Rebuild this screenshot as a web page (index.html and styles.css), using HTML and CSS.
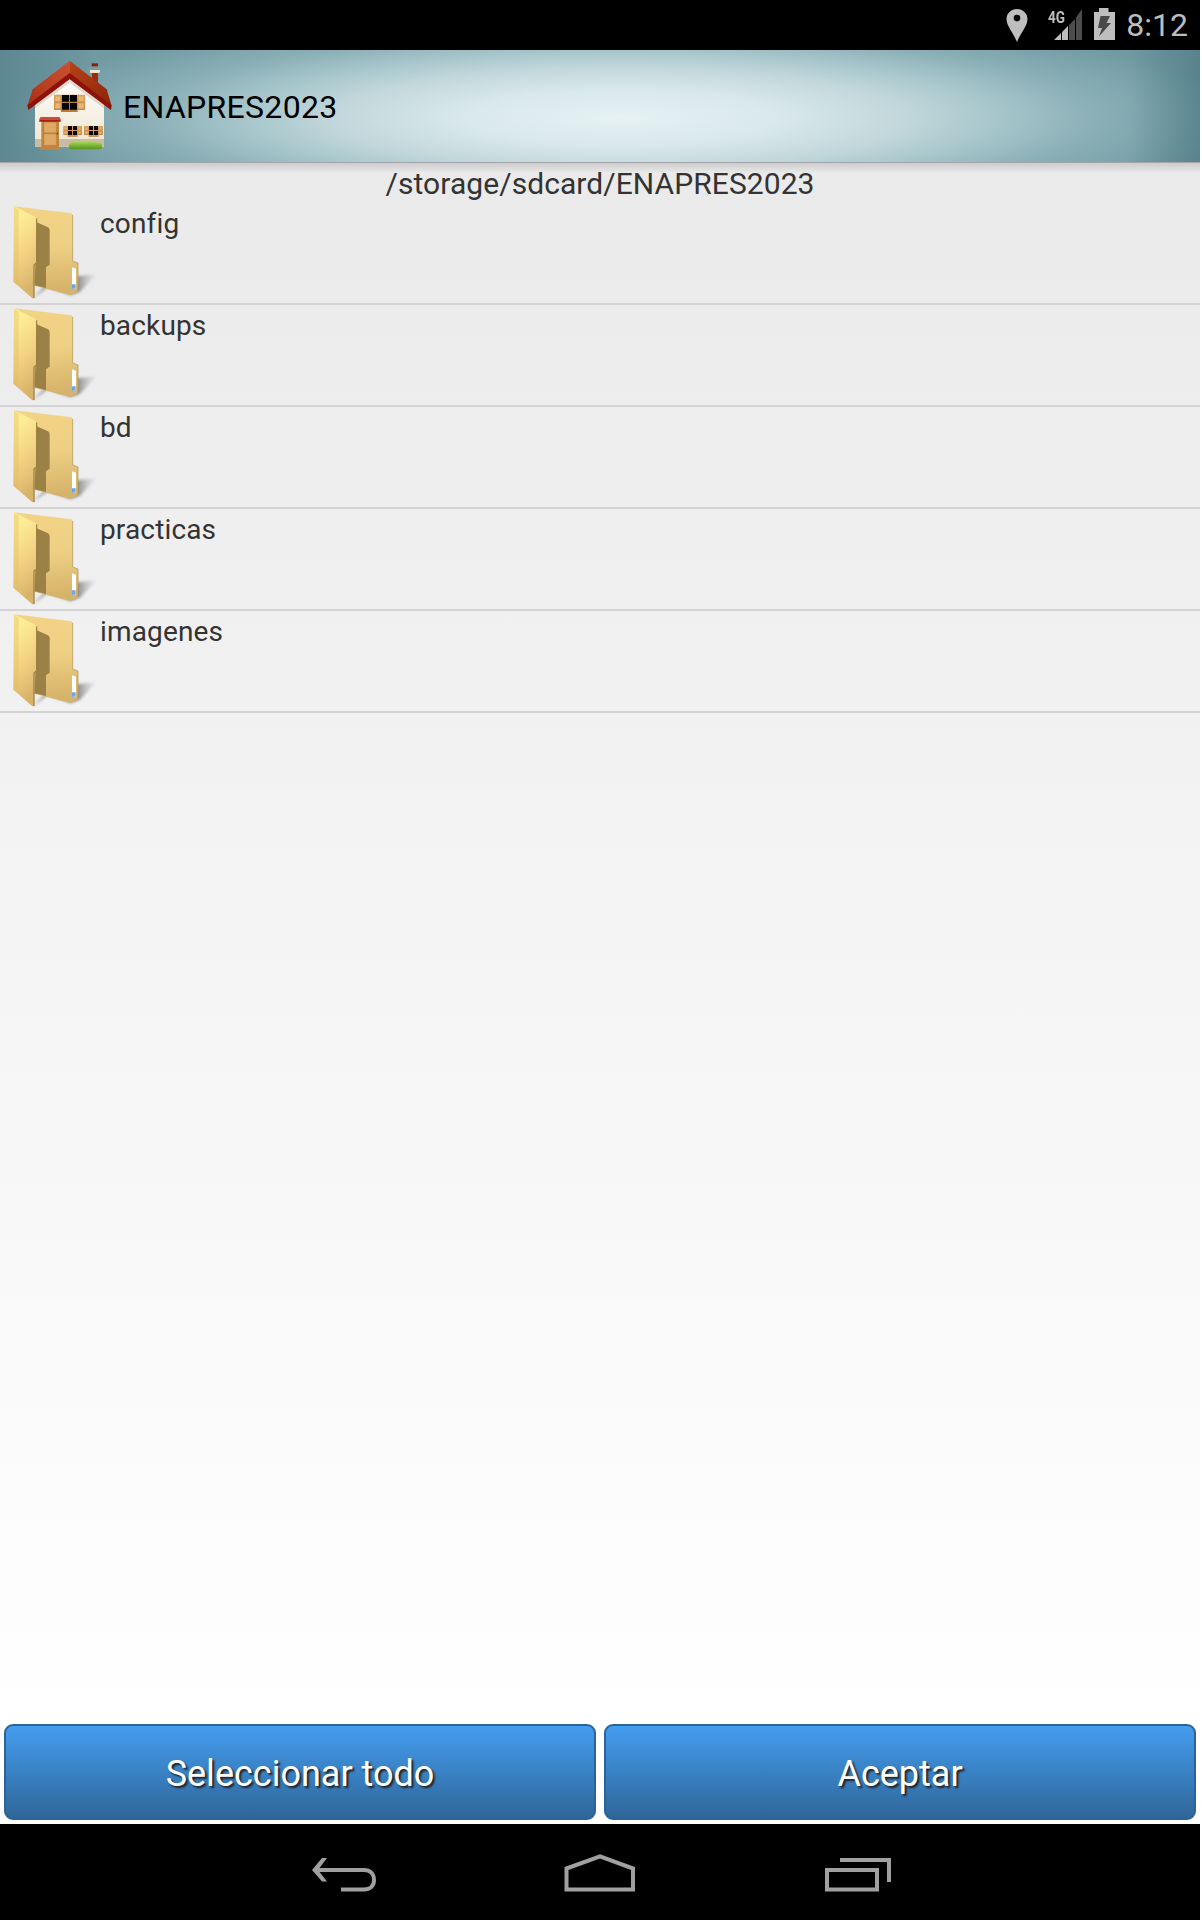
FILE: index.html
```html
<!DOCTYPE html>
<html lang="es">
<head>
<meta charset="utf-8">
<title>ENAPRES2023</title>
<link rel="stylesheet" href="styles.css">
</head>
<body>
<svg width="0" height="0" class="defs">
  <defs>
    <linearGradient id="flap" x1="0" y1="0" x2=".25" y2="1"><stop offset="0" stop-color="#fff09a"/><stop offset=".2" stop-color="#fdec95"/><stop offset=".6" stop-color="#f3d181"/><stop offset="1" stop-color="#d8b46a"/></linearGradient>
    <linearGradient id="back" x1="0" y1="0" x2=".1" y2="1"><stop offset="0" stop-color="#f3d386"/><stop offset=".5" stop-color="#eed084"/><stop offset="1" stop-color="#d6b36a"/></linearGradient>
    <linearGradient id="cast" x1="0" y1="0" x2="1" y2="0"><stop offset="0" stop-color="#666"/><stop offset=".7" stop-color="#777" stop-opacity=".8"/><stop offset="1" stop-color="#bbb" stop-opacity=".1"/></linearGradient>
    <filter id="soft" x="-20%" y="-20%" width="140%" height="140%"><feGaussianBlur stdDeviation="4"/></filter>
    <symbol id="folder" viewBox="0 21 300 300">
      <path d="M100 308L142 276L212 300L240 290L290 238L236 243L150 260Z" fill="url(#cast)" filter="url(#soft)"/>
      <path d="M42 34L214 55Q218 56 218 61V198L234 204V287L212 300L104 272L60 230Z" fill="url(#back)"/>
      <path d="M218 60V198L234 204V287" fill="none" stroke="#b08f4c" stroke-width="2"/>
      <path d="M110 82L144 97Q149 100 149 106V209L138 217V279L104 271Z" fill="#9b8145"/>
      <path d="M216 217L228 221V280L216 282Z" fill="#fff"/>
      <path d="M216 268L227 268V280L216 282Z" fill="#6aa5ee"/>
      <path d="M42 34L106 65Q111 68 111 74V204L103 209V310H97L40 260Z" fill="url(#flap)"/>
      <path d="M42 36L56 44V273L40 260Z" fill="#dcb660" opacity=".35"/>
      <path d="M110 70V204L102 209V309" fill="none" stroke="#8d7339" stroke-width="3"/>
    </symbol>
  </defs>
</svg>
<div class="screen">
  <div class="status">
    <svg class="pin" width="22" height="34" viewBox="0 0 22 34"><path fill="#bebebe" fill-rule="evenodd" d="M11 1C5 1 .5 5.500 .5 11C.5 18 7 24 11 34C15 24 21.500 18 21.500 11C21.500 5.500 17 1 11 1ZM11 6.800A3.300 3.300 0 1 1 11 13.400A3.300 3.300 0 1 1 11 6.800Z"/></svg>
    <div class="signal"><span>4G</span><svg width="36" height="34" viewBox="0 0 36 34"><path fill="#bebebe" d="M7 32L14 25V32ZM15 24L21 18V32H15Z"/><path fill="#4c4c4c" d="M22 17L28 11V32H22ZM29 9.500L35 1V32H29Z"/></svg></div>
    <svg class="battery" width="22" height="34" viewBox="0 0 22 34"><path fill="#bebebe" d="M1 4H6V0H15.500V4H22V32H1Z"/><path fill="#484848" d="M7.500 8H17L13.500 15H18L6 28.500L9 20H5Z"/></svg>
    <span class="clock">8:12</span>
  </div>
  <header class="bar">
    <svg class="house" width="110" height="105" viewBox="0 0 330 315">
      <defs>
        <linearGradient id="wall" x1="0" y1="0" x2="0" y2="1"><stop offset="0" stop-color="#fff"/><stop offset="1" stop-color="#eee5cf"/></linearGradient>
        <linearGradient id="wood" x1="0" y1="0" x2="0" y2="1"><stop offset="0" stop-color="#dfa866"/><stop offset="1" stop-color="#c98a45"/></linearGradient>
        <linearGradient id="roofL" x1="0" y1="1" x2="1" y2="0"><stop offset="0" stop-color="#a93016"/><stop offset="1" stop-color="#cc5230"/></linearGradient>
        <linearGradient id="roofR" x1="0" y1="0" x2="1" y2="1"><stop offset="0" stop-color="#b74418"/><stop offset="1" stop-color="#8c2408"/></linearGradient>
        <linearGradient id="bush" x1="0" y1="0" x2="0" y2="1"><stop offset="0" stop-color="#a9dc54"/><stop offset="1" stop-color="#54931f"/></linearGradient>
      </defs>
      <path d="M75 140L179 60L282 140V275H75Z" fill="url(#wall)"/>
      <path d="M75 252H282V275H75Z" fill="#c9bca4"/>
      <path d="M75 149L179 73L282 149V160L179 84L75 160Z" fill="#b9aa99" opacity=".4"/>
      <path d="M246 54H264V105L246 90Z" fill="#992c10"/><path d="M245 25H264V34H245Z" fill="#86200c"/><path d="M240 45H270V52L265 54H240Z" fill="#f5e8cc"/>
      <path d="M179 17L68 103L52 153L179 57Z" fill="url(#roofL)"/>
      <path d="M179 17L290 103L305 153L179 57Z" fill="url(#roofR)"/>
      <path d="M179 54L305 151L303 165L179 73L55 165L52 151Z" fill="#8e1208"/>
      <path d="M132 119H225V165H132Z" fill="url(#wood)"/><path d="M135 123H152V139H135ZM135 144H152V161H135ZM204 123H222V139H204ZM204 144H222V161H204Z" fill="#e9b775" stroke="#bb7b39"/>
      <path d="M155 120H201V164H155Z" fill="#b77a3c"/><path d="M156 120H177V140H156ZM180 120H201V140H180ZM156 144H177V164H156ZM180 144H201V164H180Z" fill="#050505"/>
      <path d="M153 165H203V171H153Z" fill="#bc7939"/>
      <path d="M160 213H216V240H160ZM222 213H279V240H222Z" fill="url(#wood)"/><path d="M162 216H172V225H162ZM162 229H172V237H162ZM204 216H213V225H204ZM204 229H213V237H204ZM225 216H234V225H225ZM225 229H234V237H225ZM267 216H276V225H267ZM267 229H276V237H267Z" fill="#e9b775" stroke="#bb7b39"/>
      <path d="M174 213H186V225H174ZM189 213H201V225H189ZM174 228H186V240H174ZM189 228H201V240H189ZM237 213H249V225H237ZM252 213H264V225H252ZM237 228H249V240H237ZM252 228H264V240H252Z" fill="#050505"/>
      <path d="M173 241H203V245H173ZM236 241H266V245H236Z" fill="#bc7939"/>
      <path d="M94 198H147V277H94Z" fill="#c1843f"/><path d="M102 202H139V233H102ZM102 237H139V271H102Z" fill="#dfa963" stroke="#b5783a"/><circle cx="142" cy="236" r="2" fill="#39210d"/>
      <path d="M91 277H150V284H91Z" fill="#c58640"/>
      <path d="M91 187H149L153 200H87Z" fill="#a71e16"/><path d="M88 190H152V194H88Z" fill="#d2674e"/>
      <path d="M177 276Q176 266 183 264Q186 256 196 260Q208 257 215 262Q224 256 231 261Q239 256 246 262Q253 259 262 263Q273 260 276 269V279Q274 283 268 283H184Q177 283 177 276Z" fill="url(#bush)"/>
    </svg>
    <h1>ENAPRES2023</h1>
  </header>
  <main>
    <div class="path">/storage/sdcard/ENAPRES2023</div>
    <ul class="files">
      <li><svg><use href="#folder"/></svg><span>config</span></li>
      <li><svg><use href="#folder"/></svg><span>backups</span></li>
      <li><svg><use href="#folder"/></svg><span>bd</span></li>
      <li><svg><use href="#folder"/></svg><span>practicas</span></li>
      <li><svg><use href="#folder"/></svg><span>imagenes</span></li>
    </ul>
    <div class="actions"><button>Seleccionar todo</button><button>Aceptar</button></div>
  </main>
  <nav class="nav">
    <svg width="100" height="60" viewBox="0 0 100 60" fill="none" stroke="#a0a0a0" stroke-width="4"><path d="M26 25H74C80 25 84 29 84 35C84 41 80 44.500 74 44.500H51"/><path fill="#a0a0a0" stroke="none" d="M22 25L32 13H37L28 25L37 36.500H32Z"/></svg>
    <svg width="100" height="60" viewBox="0 0 100 60" fill="none" stroke="#a0a0a0" stroke-width="4"><path d="M16.500 44.500V23.500L50 11.300L83 23.500V44.500Z"/></svg>
    <svg width="100" height="60" viewBox="0 0 100 60" fill="none" stroke="#a0a0a0" stroke-width="4"><path d="M17 25H67V44.500H17ZM30 15H79V37"/></svg>
  </nav>
</div>
</body>
</html>
```
FILE: styles.css
```css
* { box-sizing: border-box; }
body { margin: 0; background: #fff; font-family: Roboto, "Liberation Sans", sans-serif; }
.defs { display: block; position: absolute; }
.screen { width: 1200px; height: 1920px; display: flex; flex-direction: column; background: #000; overflow: hidden; }
.status { height: 50px; flex: none; display: flex; justify-content: flex-end; align-items: flex-start; padding: 8px 12px 0 0; background: #000; color: #bebebe; }
.status svg { display: block; }
.pin { margin-right: 19px; }
.signal { display: flex; position: relative; width: 36px; margin-right: 10px; }
.signal span { position: absolute; left: 1px; top: 0; font: 700 17px/18px Roboto, sans-serif; transform: scaleX(.8); transform-origin: left; }
.battery { margin-right: 11px; }
.clock { font-size: 32px; line-height: 34px; }
.bar { height: 112px; flex: none; display: flex; align-items: flex-start; padding: 5px 0 0 10px; background:
  linear-gradient(90deg, rgba(65,110,120,.4), rgba(65,110,120,0) 8%, rgba(65,110,120,0) 94%, rgba(65,110,120,.5)),
  radial-gradient(ellipse 620px 110px at 620px 68px, #e6f2f3 0%, #d9e8ec 25%, #c3d8dc 45%, #a8c7cc 60%, #8aafb6 77%, #7099a2 100%); }
.house { flex: none; display: block; }
.bar h1 { margin: 33px 0 0 3px; font-size: 32px; line-height: 38px; font-weight: 400; letter-spacing: .3px; color: #000; }
main { flex: 1; display: flex; flex-direction: column; border-top: 1px solid #a6a6aa; background: linear-gradient(rgba(0,0,0,.13), rgba(0,0,0,0) 10px), linear-gradient(#eaeaea, #fff 95%); color: #333; }
.path { height: 40px; text-align: center; font-size: 30px; line-height: 41px; letter-spacing: .07px; }
.files { list-style: none; margin: 0; padding: 0; flex: 1; }
.files li { height: 102px; display: flex; border-bottom: 2px solid #d3d3d3; font-size: 28px; line-height: 42px; letter-spacing: .15px; }
.files svg { width: 100px; height: 100px; flex: none; margin-top: -1px; }
.actions { display: flex; gap: 8px; padding: 0 4px 4px; }
.actions button { flex: 1; height: 96px; border: 2px solid #2b6499; border-radius: 9px; background: linear-gradient(#449def, #2f6699); color: #fff; font: 36px Roboto, sans-serif; text-shadow: 2px 2px 2px #222; padding-top: 5px; }
.nav { height: 96px; flex: none; display: flex; justify-content: center; gap: 160px; padding-top: 21px; }
```
